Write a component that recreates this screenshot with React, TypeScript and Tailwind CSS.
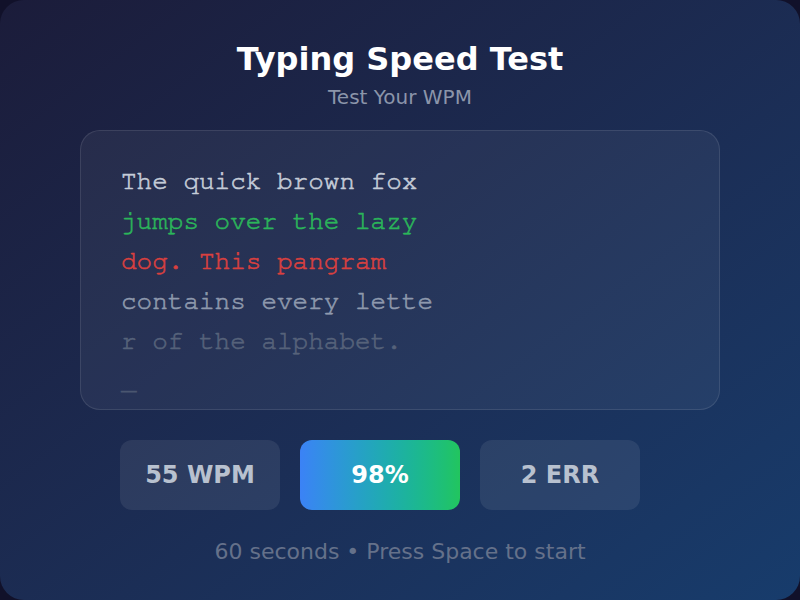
import React from 'react';

const lines = [
  { text: 'The quick brown fox', color: 'text-[#c5ccd8]' },
  { text: 'jumps over the lazy', color: 'text-[#2bb55a]' },
  { text: 'dog. This pangram', color: 'text-[#d9403f]' },
  { text: 'contains every lette', color: 'text-[#8e99ad]' },
  { text: 'r of the alphabet.', color: 'text-[#56627a]' },
];

export default function App() {
  return (
    <div className="w-[800px] h-[600px] bg-[#11112a] overflow-hidden">
      <div
        className="w-full h-full rounded-[24px] bg-gradient-to-br from-[#1b1c3a] to-[#173c6c] flex flex-col items-center"
        style={{ fontFamily: '"DejaVu Sans", Verdana, sans-serif' }}
      >
        <h1 className="mt-[43px] text-[32px] leading-none font-bold text-white">Typing Speed Test</h1>
        <p className="mt-[12px] text-[20px] leading-none text-[#8b95aa]">Test Your WPM</p>

        <div className="mt-[23px] w-[640px] h-[280px] rounded-[20px] border border-white/10 bg-white/5 px-[40px] pt-[30px] overflow-hidden">
          <div
            className="text-[26px] leading-[40px] [-webkit-text-stroke:0.6px_currentColor]"
            style={{ fontFamily: '"Nimbus Mono PS", "Nimbus Mono L", FreeMono, Courier, "Liberation Mono", monospace' }}
          >
            {lines.map(l => (
              <div key={l.text} className={`whitespace-pre ${l.color}`}>{l.text}</div>
            ))}
            <div className="text-[#4a5670]">_</div>
          </div>
        </div>

        <div className="mt-[30px] mr-[40px] flex gap-[20px]">
          <div className="w-[160px] h-[70px] rounded-[12px] bg-white/[0.08] flex items-center justify-center text-[24px] font-bold text-[#b8c1cf]">
            55 WPM
          </div>
          <div className="w-[160px] h-[70px] rounded-[12px] bg-gradient-to-r from-[#3b82f6] to-[#22c55e] flex items-center justify-center text-[24px] font-bold text-white">
            98%
          </div>
          <div className="w-[160px] h-[70px] rounded-[12px] bg-white/[0.08] flex items-center justify-center text-[24px] font-bold text-[#b8c1cf]">
            2 ERR
          </div>
        </div>

        <p className="mt-[31px] text-[22px] leading-none text-[#65718a]">60 seconds • Press Space to start</p>
      </div>
    </div>
  );
}
